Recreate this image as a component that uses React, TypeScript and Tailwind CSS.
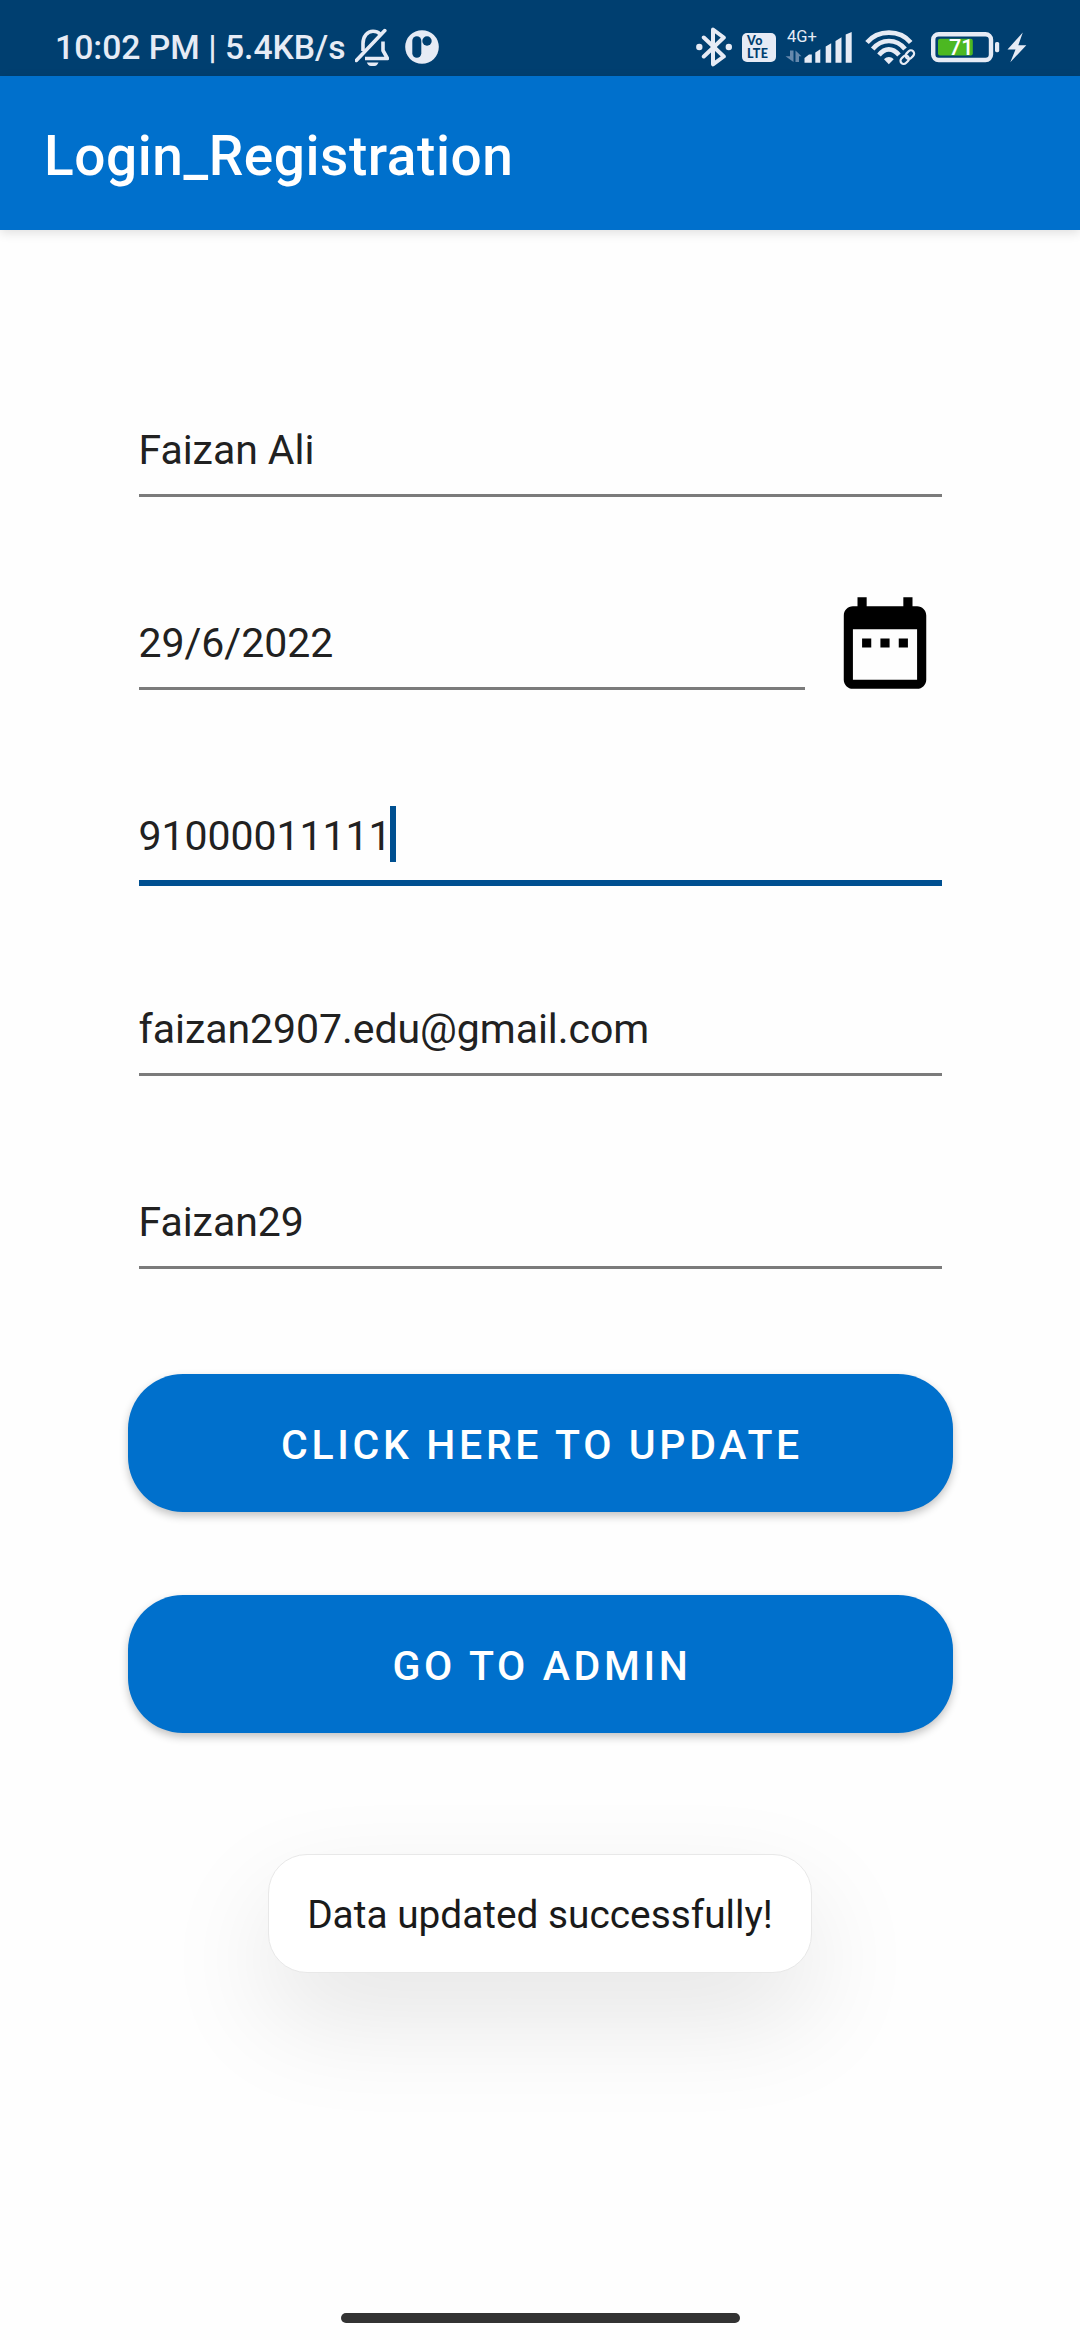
import React from "react";

const ink = "#e6ebf5";

function BellOff() {
  return (
    <svg className="ml-[10px] h-[38px] w-[34px]" viewBox="354 28 34 38" fill="none" stroke={ink} strokeWidth="3.6">
      <path d="M355.3 60.4 383.8 30.6" strokeLinecap="round" />
      <path d="M362 51V43.5C362 36 366.500 31.300 372 31.300C374.800 31.300 377.300 32.300 379 34" />
      <path d="M382 41.500V50.500L386.500 58.500H364" strokeLinejoin="round" />
      <path d="M365.800 62.400H377.500C376.500 65 374.500 66.200 371.700 66.200S366.800 65 365.800 62.400Z" fill={ink} stroke="none" />
    </svg>
  );
}

function AppBadge() {
  return (
    <svg className="ml-4 h-[34px] w-[34px]" viewBox="0 0 34 34">
      <circle cx="17" cy="17" r="16.800" fill={ink} />
      <rect x="7.300" y="6.300" width="9" height="21.500" rx="4.500" fill="#003f70" />
      <circle cx="22" cy="11" r="4.700" fill="#003f70" />
    </svg>
  );
}

function Bluetooth() {
  return (
    <svg className="mt-[27px] h-[40px] w-[37px]" viewBox="695 27 37 40" fill="none" stroke={ink}>
      <path d="M702.800 37.500 722.800 56.500 712 64.300V29.500L722.800 37.500 702.800 56.500" strokeWidth="4" strokeLinejoin="round" strokeLinecap="round" />
      <circle cx="698.300" cy="47" r="3.200" fill={ink} stroke="none" />
      <circle cx="727.800" cy="47" r="3.200" fill={ink} stroke="none" />
    </svg>
  );
}

function Signal() {
  return (
    <svg className="-mt-[6px] h-[39px] w-[68px] overflow-visible" viewBox="784 25 68 39">
      <g fill="#6689ad">
        <path d="M789 50.500H792.500V62L784.500 56.300H789Z" />
        <path d="M794.500 50.500V62H798V56.300H800.500Z" />
      </g>
      <g fill={ink}>
        <path d="M803.500 58 808 54.600H810.800V62.800H803.500Z" />
        <path d="M814.300 52.500 819.300 49.300V62.800H814.300Z" />
        <path d="M824.700 46.500 830.200 43.300V62.800H824.700Z" />
        <path d="M834.500 41 840.500 37.300V62.800H834.500Z" />
        <path d="M844.700 34.500 850.700 32V62.800H844.700Z" />
      </g>
      <text x="786" y="42.300" fontSize="16.500" fontFamily="Roboto, sans-serif" fill={ink}>4G+</text>
    </svg>
  );
}

function Wifi() {
  return (
    <svg className="ml-[12px] mt-[29px] h-[38px] w-[51px]" viewBox="864 29 51 38" fill="none" stroke={ink}>
      <path d="M866 42.500C877 29.300 899 29.300 909.700 42.500" strokeWidth="4.600" />
      <path d="M871.700 49C880.500 38.300 895.500 38.300 904 49" strokeWidth="4.600" />
      <path d="M878 55C884 47.500 891.500 47.500 898 55" strokeWidth="4.600" />
      <path d="M883 59.200C886 56.300 889.800 56.300 892.700 59.200L887.800 64.200Z" fill={ink} stroke="none" />
      <g transform="rotate(-45 906.300 57.200)" strokeWidth="5.500" stroke="#003f70">
        <rect x="898.500" y="54" width="8.500" height="6.400" rx="3.200" />
        <rect x="905.600" y="54" width="8.500" height="6.400" rx="3.200" />
      </g>
      <g transform="rotate(-45 906.300 57.200)" strokeWidth="2.200">
        <rect x="898" y="54" width="9.300" height="6.400" rx="3.200" />
        <rect x="905.300" y="54" width="9.300" height="6.400" rx="3.200" />
      </g>
    </svg>
  );
}

function Battery() {
  return (
    <svg className="ml-[15px] mt-[31px] h-[32px] w-[69px]" viewBox="930 31 69 32">
      <rect x="932.200" y="34.200" width="57.800" height="25.800" rx="5.500" fill="none" stroke={ink} strokeWidth="4.400" />
      <rect x="937" y="38.700" width="34.800" height="16.800" rx="2" fill="#4cb822" />
      <rect x="994" y="42" width="4.200" height="10.200" rx="1.600" fill={ink} />
      <text x="948" y="55.300" fontSize="21.500" fontWeight="500" fontFamily="Roboto, sans-serif" fill="#fff">71</text>
    </svg>
  );
}

function Bolt() {
  return (
    <svg className="ml-[7px] mt-[32px] h-[31px] w-[20px]" viewBox="1006 32 20 31" fill={ink}>
      <path d="M1021.800 32.500 1006.500 49.500H1014.500L1009.300 62.300 1025.300 45.300H1017.300Z" />
    </svg>
  );
}

function StatusBar() {
  return (
    <div className="flex h-[76px] shrink-0 items-start justify-between bg-[#003f70] pl-[55px] pr-[53px]">
      <div className="mt-[28px] flex h-[38px] items-center">
        <span className="block w-[290px] whitespace-nowrap pt-[2px] text-[33.7px] font-medium leading-[40px] text-[#e6ebf5]">10:02 PM | 5.4KB/s</span>
        <BellOff />
        <AppBadge />
      </div>
      <div className="flex items-start">
        <Bluetooth />
        <div className="ml-[9px] mt-[33px] flex h-[29px] w-[34px] flex-col items-start rounded-[5px] bg-[#e6ebf5] pl-[5px] pt-[2px] font-['Lato'] text-[12.5px] font-black leading-[12.5px] tracking-[0.4px] text-[#003f70]">
          <span>Vo</span>
          <span>LTE</span>
        </div>
        <div className="ml-[9px] mt-[31px]"><Signal /></div>
        <Wifi />
        <Battery />
        <Bolt />
      </div>
    </div>
  );
}

function Field({ value, focused = false }: { value: string; focused?: boolean }) {
  return (
    <div className="flex h-[193px] w-full min-w-0 flex-col justify-end">
      <div className="mb-[16px] flex h-[56px] items-center text-[41px] leading-[56px] tracking-[-0.05px] text-[#212121]">
        <span>{value}</span>
        {focused && <span className="-ml-[1px] -mt-[4px] h-[56px] w-[6px] bg-[#005091]" />}
      </div>
      {focused ? <div className="-mb-[3px] h-[6px] shrink-0 bg-[#005091]" /> : <div className="h-[3px] shrink-0 bg-[#7b7b7b]" />}
    </div>
  );
}

function ActionButton({ label }: { label: string }) {
  return (
    <button className="flex h-[138px] w-[825px] items-center justify-center rounded-[55px] bg-[#0070cc] pl-[4px] pt-[5px] text-[41px] font-medium tracking-[3.65px] text-white shadow-[0_4px_8px_rgba(0,0,0,0.24)]">
      {label}
    </button>
  );
}

export default function App() {
  return (
    <div className="flex h-[2340px] w-[1080px] flex-col overflow-hidden bg-[#fefefe] font-['Roboto',sans-serif]">
      <StatusBar />
      <header className="flex h-[154px] shrink-0 items-center bg-[#0070cc] pl-[44px] pt-[5px] shadow-[0_3px_10px_rgba(0,0,0,0.12)]">
        <h1 className="text-[55px] font-medium leading-[64px] tracking-[0.55px] text-white">Login_Registration</h1>
      </header>
      <main className="flex flex-1 flex-col items-center">
        <form className="mt-[74px] flex w-[803px] flex-col">
          <Field value="Faizan Ali" />
          <div className="flex items-end">
            <Field value="29/6/2022" />
            <svg className="-mb-[8px] ml-[25px] mr-[2px] h-[110px] w-[110px] shrink-0" viewBox="0 0 24 24">
              <path d="M9 11H7v2h2v-2zm4 0h-2v2h2v-2zm4 0h-2v2h2v-2zm2-7h-1V2h-2v2H8V2H6v2H5c-1.110 0-1.990.9-1.990 2L3 20c0 1.100.89 2 2 2h14c1.100 0 2-.9 2-2V6c0-1.100-.9-2-2-2zm0 16H5V9h14v11z" />
            </svg>
          </div>
          <Field value="91000011111" focused />
          <Field value="faizan2907.edu@gmail.com" />
          <Field value="Faizan29" />
        </form>
        <div className="mt-[105px] flex flex-col gap-[83px]">
          <ActionButton label="CLICK HERE TO UPDATE" />
          <ActionButton label="GO TO ADMIN" />
        </div>
        <div className="mt-[121px] flex h-[119px] w-[544px] items-center justify-center rounded-[39px] border border-[#e8e8e8] bg-white pt-[4px] text-[38.8px] text-[#1a1a1a] shadow-[0_45px_110px_rgba(0,0,0,0.10)]">
          Data updated successfully!
        </div>
        <div className="mb-[17px] mt-auto h-[10px] w-[399px] rounded-full bg-[#333333]" />
      </main>
    </div>
  );
}
